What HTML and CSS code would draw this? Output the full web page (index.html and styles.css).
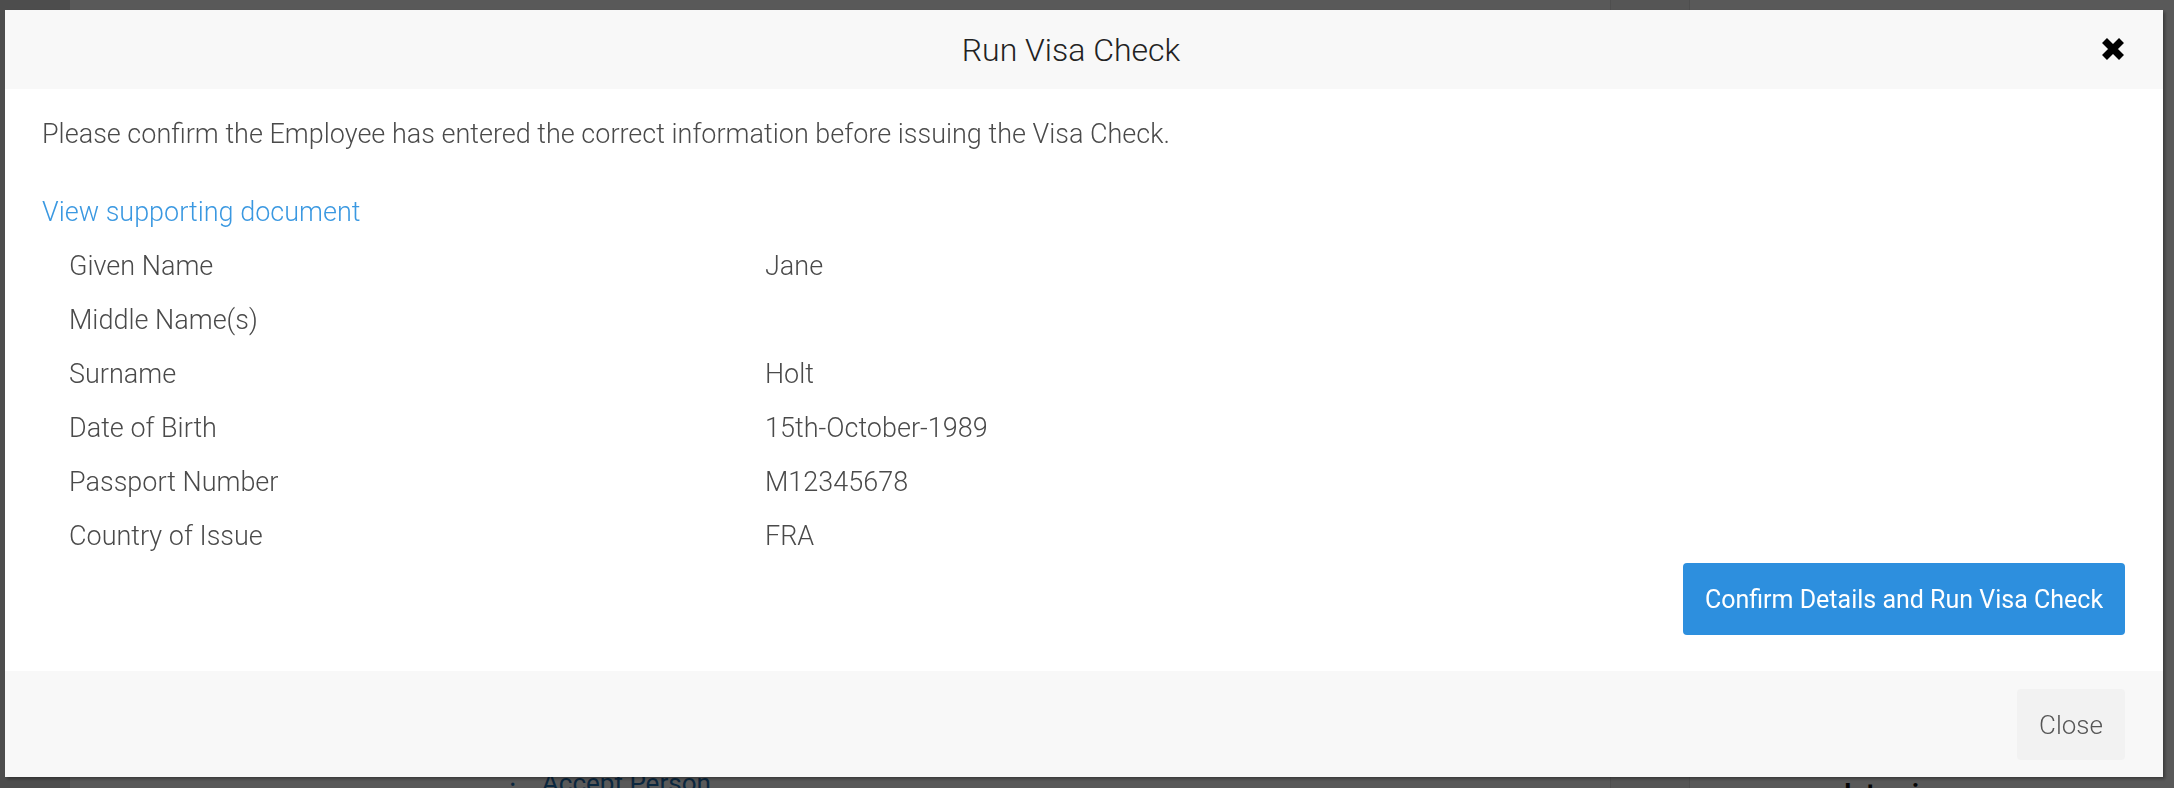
FILE: index.html
```html
<!DOCTYPE html>
<html lang="en">
<head>
<meta charset="utf-8">
<title>Run Visa Check</title>
<link rel="stylesheet" href="styles.css">
</head>
<body>
<div class="page">
  <div class="page-sidebar"></div>
  <div class="page-main">
    <div class="page-accept"><span class="page-bullet">•</span> Accept Person</div>
  </div>
  <div class="page-gap"></div>
  <div class="page-right">
    <div class="page-interview">Interview</div>
  </div>
</div>
<div class="overlay"></div>

<div class="modal" role="dialog" aria-labelledby="modal-title">
  <div class="modal-header">
    <h1 class="modal-title" id="modal-title">Run Visa Check</h1>
    <button class="modal-x" type="button" aria-label="Close">
      <svg width="26" height="26" viewBox="0 0 26 26" aria-hidden="true">
        <path d="M4.5 4.5 L21.5 21.5 M21.5 4.5 L4.5 21.5" stroke="#000" stroke-width="7" fill="none" stroke-linecap="butt"/>
      </svg>
    </button>
  </div>
  <div class="modal-body">
    <p class="intro">Please confirm the Employee has entered the correct information before issuing the Visa Check.</p>
    <a class="doc-link" href="#">View supporting document</a>
    <div class="details">
      <div class="row"><span class="label">Given Name</span><span class="value">Jane</span></div>
      <div class="row"><span class="label">Middle Name(s)</span><span class="value"></span></div>
      <div class="row"><span class="label">Surname</span><span class="value">Holt</span></div>
      <div class="row"><span class="label">Date of Birth</span><span class="value">15th-October-1989</span></div>
      <div class="row"><span class="label">Passport Number</span><span class="value">M12345678</span></div>
      <div class="row"><span class="label">Country of Issue</span><span class="value">FRA</span></div>
    </div>
    <div class="actions">
      <button class="btn-primary" type="button">Confirm Details and Run Visa Check</button>
    </div>
  </div>
  <div class="modal-footer">
    <button class="btn-close" type="button">Close</button>
  </div>
</div>
</body>
</html>
```

FILE: styles.css
```css
* { box-sizing: border-box; }

html, body {
  margin: 0;
  padding: 0;
  width: 100%;
  height: 100%;
  overflow: hidden;
}

body {
  font-family: "Roboto Light", Roboto, "Liberation Sans", Arial, sans-serif;
  background: #ffffff;
}

/* background page (under the overlay) */
.page {
  display: grid;
  grid-template-columns: 70px 1540px 80px 1fr;
  height: 788px;
}
.page-sidebar { background: #dcdcdc; }
.page-main {
  background: #ffffff;
  display: flex;
  flex-direction: column;
  justify-content: flex-end;
  padding-left: 440px;
}
.page-gap { background: #f4f4f4; border-left: 1px solid #e0e0e0; border-right: 1px solid #e0e0e0; }
.page-right {
  background: #ffffff;
  display: flex;
  flex-direction: column;
  justify-content: flex-end;
  padding-left: 154px;
}
.page-accept {
  font-family: Roboto, "Liberation Sans", Arial, sans-serif;
  color: #1f6fb2;
  font-size: 26px;
  line-height: 30px;
  margin-bottom: -12px;
}
.page-bullet { margin-right: 20px; font-size: 16px; vertical-align: middle; }
.page-interview {
  font-family: Roboto, "Liberation Sans", Arial, sans-serif;
  color: #111;
  font-weight: 700;
  font-size: 26px;
  line-height: 30px;
  margin-bottom: -20px;
}

.overlay {
  position: fixed;
  inset: 0;
  background: rgba(0, 0, 0, 0.65);
}

/* modal */
.modal {
  position: fixed;
  left: 5px;
  top: 10px;
  width: 2158px;
  background: #ffffff;
  display: flex;
  flex-direction: column;
  box-shadow: 2px 2px 3px rgba(0,0,0,0.35);
}

.modal-header {
  height: 79px;
  background: #f8f8f8;
  display: flex;
  align-items: center;
  padding: 0 37px;
}
.modal-title {
  flex: 1;
  margin: 0;
  text-align: center;
  font-size: 32px;
  font-weight: 300;
  color: #222;
}
.modal-x {
  width: 26px;
  height: 26px;
  padding: 0;
  margin-top: -2px;
  border: 0;
  background: transparent;
  display: flex;
}

.modal-body {
  padding: 26px 38px 36px 37px;
  display: flex;
  flex-direction: column;
}
.intro {
  margin: 0;
  font-size: 27px;
  line-height: 39px;
  font-weight: 300;
  color: #4a4a4a;
}
.doc-link {
  margin-top: 39px;
  font-size: 27px;
  line-height: 39px;
  font-weight: 300;
  color: #3a98e1;
  text-decoration: none;
  align-self: flex-start;
}
.details {
  margin-top: 7px;
  display: flex;
  flex-direction: column;
}
.row {
  display: grid;
  grid-template-columns: 696px 1fr;
  height: 54px;
  line-height: 54px;
  font-size: 27px;
  font-weight: 300;
  color: #4a4a4a;
  padding-left: 27px;
}
.actions {
  display: flex;
  justify-content: flex-end;
}
.btn-primary {
  width: 442px;
  height: 72px;
  background: #2d8fde;
  color: #ffffff;
  border: 0;
  border-radius: 4px;
  font-family: Roboto, "Liberation Sans", Arial, sans-serif;
  font-size: 25px;
  font-weight: 400;
  padding: 0;
  white-space: nowrap;
}

.modal-footer {
  height: 106px;
  background: #f8f8f8;
  display: flex;
  justify-content: flex-end;
  align-items: flex-start;
  padding: 18px 38px 0 0;
}
.btn-close {
  width: 108px;
  height: 71px;
  background: #f2f2f2;
  border: 0;
  border-radius: 4px;
  color: #555;
  font-family: "Roboto Light", Roboto, "Liberation Sans", Arial, sans-serif;
  font-size: 26px;
  font-weight: 300;
  padding: 0;
}
```
